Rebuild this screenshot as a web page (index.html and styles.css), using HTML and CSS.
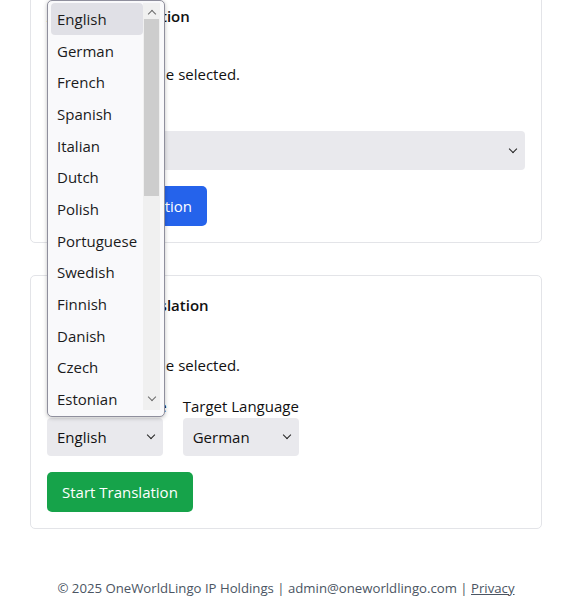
FILE: index.html
```html
<!DOCTYPE html>
<html lang="en">
<head>
<meta charset="utf-8">
<title>OneWorldLingo</title>
<link rel="stylesheet" href="styles.css">
</head>
<body>
<main class="page">
  <section class="card card-first">
    <h3 class="card-title">Audio Transcription</h3>
    <div class="field-label">Select Audio</div>
    <div class="file-input"><span class="file-btn">Browse…</span><span class="file-text">No file selected.</span></div>
    <div class="field-label">Language</div>
    <div class="select select-full"><span>English</span><span class="chev"></span></div>
    <button class="btn btn-blue">Start Transcription</button>
  </section>

  <section class="card">
    <h3 class="card-title">Document Translation</h3>
    <div class="field-label">Select File</div>
    <div class="file-input file-input-tight"><span class="file-btn">Browse…</span><span class="file-text">No file selected.</span></div>
    <div class="lang-row">
      <div class="lang-col">
        <div class="field-label lang-label">Source Language</div>
        <div class="select select-small"><span>English</span><span class="chev"></span></div>
      </div>
      <div class="lang-col">
        <div class="field-label lang-label">Target Language</div>
        <div class="select select-small"><span>German</span><span class="chev"></span></div>
      </div>
    </div>
    <button class="btn btn-green">Start Translation</button>
  </section>

  <footer class="footer">© 2025 OneWorldLingo IP Holdings | admin@oneworldlingo.com | <a href="#">Privacy</a></footer>
</main>

<div class="dropdown">
  <ul class="options">
    <li class="active">English</li>
    <li>German</li>
    <li>French</li>
    <li>Spanish</li>
    <li>Italian</li>
    <li>Dutch</li>
    <li>Polish</li>
    <li>Portuguese</li>
    <li>Swedish</li>
    <li>Finnish</li>
    <li>Danish</li>
    <li>Czech</li>
    <li>Estonian</li>
  </ul>
  <div class="scrollbar">
    <div class="arrow arrow-up"></div>
    <div class="thumb"></div>
    <div class="arrow arrow-down"></div>
  </div>
</div>
</body>
</html>
```

FILE: styles.css
```css
* { box-sizing: border-box; }
html, body { margin: 0; padding: 0; background: #fff; }
body {
  font-family: "Open Sans", "Noto Sans", sans-serif;
  font-size: 15px;
  color: #111;
  position: relative;
  overflow: hidden;
}
.page {
  margin-top: -14px;
  padding: 0 28px 0 30px;
  display: flex;
  flex-direction: column;
}
.card {
  border: 1px solid #e3e4e8;
  border-radius: 5px;
  padding: 17px 16px 16px;
  display: flex;
  flex-direction: column;
  align-items: flex-start;
  margin-top: 32px;
}
.card-first { margin-top: 0; }
.card-title {
  margin: 0;
  font-size: 15px;
  font-weight: 600;
  line-height: 24px;
  margin-bottom: 4px;
}
.field-label { line-height: 22px; }
.lang-label { margin-bottom: 1px; }
.file-input {
  display: flex;
  align-items: center;
  height: 30px;
  margin-top: 5px;
  margin-bottom: 20px;
}
.file-input-tight { margin-top: 7px; margin-bottom: 15px; }
.file-btn { width: 82px; }
.select {
  background: #e9e9ed;
  border-radius: 4px;
  height: 38px;
  display: flex;
  align-items: center;
  justify-content: space-between;
  padding: 0 7px 0 10px;
}
.select-full { width: 100%; height: 39px; }
.select-small { width: 116px; }
.chev {
  width: 6px; height: 6px;
  border-right: 1.8px solid #222;
  border-bottom: 1.8px solid #222;
  transform: translateY(-2px) rotate(45deg);
  margin-right: 2px;
}
.lang-row {
  display: flex;
  gap: 16px;
}
.lang-col { display: flex; flex-direction: column; align-items: flex-start; }
.btn {
  border: 0;
  color: #fff;
  font: inherit;
  height: 40px;
  padding: 0 15px;
  border-radius: 5px;
  margin-top: 16px;
}
.btn-blue { background: #2563eb; }
.btn-green { background: #16a34a; }
.footer {
  text-align: center;
  font-size: 13.2px;
  color: #4b5563;
  margin-top: 49px;
  line-height: 20px;
}
.footer a { color: #4b5563; }

.dropdown {
  position: absolute;
  left: 47px;
  top: 0;
  width: 118px;
  height: 417px;
  background: #f9f9fb;
  border: 1px solid #8f8f9d;
  border-radius: 5px;
  box-shadow: 0 1px 4px rgba(0,0,0,0.25);
  display: flex;
}
.options {
  list-style: none;
  margin: 0;
  padding: 2px 0 0 3px;
  width: 95px;
  font-size: 15px;
  color: #1b1b1b;
}
.options li {
  height: 31.67px;
  line-height: 32px;
  padding-left: 6px;
  border-radius: 4px;
  white-space: nowrap;
}
.options li.active { background: #e0e0e6; }
.scrollbar {
  width: 17px;
  background: #f0f0f0;
  height: 407px;
  margin-top: 2px;
  display: flex;
  flex-direction: column;
  align-items: center;
}
.thumb {
  width: 15px;
  height: 177px;
  background: #cdcdcd;
  margin-top: 2px;
}
.arrow {
  width: 6px; height: 6px;
  border-right: 1.6px solid #6b6b6b;
  border-bottom: 1.6px solid #6b6b6b;
}
.arrow-up { transform: rotate(-135deg); margin-top: 8px; }
.arrow-down { transform: rotate(45deg); margin-top: auto; margin-bottom: 10px; }
```
